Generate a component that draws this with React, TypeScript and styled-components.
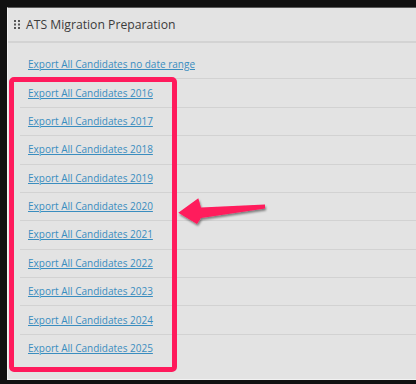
import React from 'react';
import styled, { createGlobalStyle } from 'styled-components';

const GlobalStyle = createGlobalStyle`
  html, body {
    margin: 0;
    padding: 0;
    background: #111111;
  }
  body {
    font-family: "Open Sans", "Liberation Sans", sans-serif;
  }
`;

const years = [2016, 2017, 2018, 2019, 2020, 2021, 2022, 2023, 2024, 2025];

const Page = styled.div`
  width: 416px;
  height: 384px;
  box-sizing: border-box;
  padding: 7px 0 4px 7px;
  background: #111111;
`;

const Panel = styled.section`
  position: relative;
  height: 100%;
  box-sizing: border-box;
  background: #e3e3e3;
  border: 1px solid #f2f2f2;
  border-top-color: #5a5a5a;
  border-right: none;
`;

const Header = styled.header`
  height: 33px;
  display: flex;
  align-items: center;
  gap: 6px;
  padding-left: 6px;
  border-bottom: 2px solid #d3d3d3;
`;

const Title = styled.h2`
  margin: 0;
  font-size: 12.2px;
  font-weight: 400;
  color: #3c3c3c;
`;

const Body = styled.div`
  padding: 8px 0 0 12px;
`;

const Row = styled.div<{ $last?: boolean }>`
  height: 28.375px;
  box-sizing: border-box;
  display: flex;
  align-items: center;
  padding: 0 0 1px 8px;
  border-bottom: ${p => (p.$last ? 'none' : '1px solid #d2d2d2')};
`;

const ExportLink = styled.a`
  font-size: 10px;
  color: #3a8dbf;
  text-decoration: underline;
  cursor: pointer;
`;

const Highlight = styled.div`
  position: absolute;
  left: 1px;
  top: 69px;
  width: 168px;
  height: 295px;
  box-sizing: border-box;
  border: 5px solid #ff1a5c;
  border-radius: 5px;
  pointer-events: none;
`;

const Arrow = styled.svg`
  position: absolute;
  left: 162px;
  top: 182px;
  width: 100px;
  height: 40px;
  overflow: visible;
  pointer-events: none;
`;

const Handle = () => (
  <svg width="6" height="9" viewBox="0 0 6 9">
    {[0, 3.5, 7].map(y =>
      [0, 4].map(x => <rect key={`${x}-${y}`} x={x} y={y} width="2" height="2" fill="#555" />)
    )}
  </svg>
);

export default function App() {
  return (
    <>
      <GlobalStyle />
      <Page>
        <Panel>
          <Header>
            <Handle />
            <Title>ATS Migration Preparation</Title>
          </Header>
          <Body>
            <Row>
              <ExportLink>Export All Candidates no date range</ExportLink>
            </Row>
            {years.map((y, i) => (
              <Row key={y} $last={i === years.length - 1}>
                <ExportLink>Export All Candidates {y}</ExportLink>
              </Row>
            ))}
          </Body>
          <Highlight />
          <Arrow viewBox="0 0 100 40">
            <defs>
              <filter id="shade" x="-20%" y="-40%" width="140%" height="180%">
                <feDropShadow dx="1" dy="2" stdDeviation="1.2" floodColor="#000" floodOpacity="0.45" />
              </filter>
            </defs>
            <polygon
              points="8.3,22.7 28.3,8.3 31,17.5 95,14.5 95,18.5 31,28 27,34"
              fill="#ff1a5c"
              filter="url(#shade)"
            />
          </Arrow>
        </Panel>
      </Page>
    </>
  );
}
